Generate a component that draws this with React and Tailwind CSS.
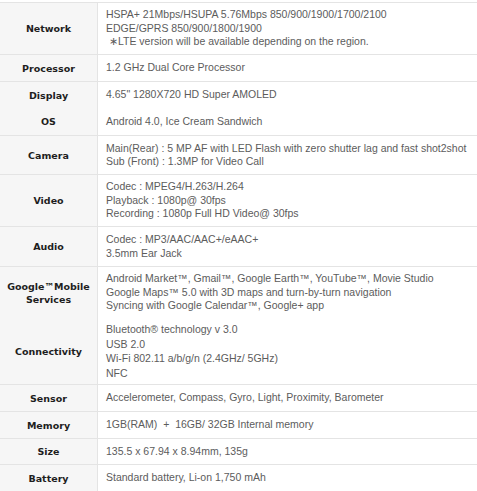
import React from "react";

const rows = [
  { label: ["Network"], h: "h-[52px]", lines: ["HSPA+ 21Mbps/HSUPA 5.76Mbps 850/900/1900/1700/2100", "EDGE/GPRS 850/900/1800/1900", "\u00a0\u2217LTE version will be available depending on the region."] },
  { label: ["Processor"], h: "h-[27px]", lines: ["1.2 GHz Dual Core Processor"] },
  { label: ["Display"], h: "h-[27px]", lines: ["4.65\" 1280X720 HD Super AMOLED"] },
  { label: ["OS"], h: "h-[27px]", lines: ["Android 4.0, Ice Cream Sandwich"], noBorder: true },
  { label: ["Camera"], h: "h-[39px]", lines: ["Main(Rear) : 5 MP AF with LED Flash with zero shutter lag and fast shot2shot", "Sub (Front) : 1.3MP for Video Call"] },
  { label: ["Video"], h: "h-[52px]", lines: ["Codec : MPEG4/H.263/H.264", "Playback : 1080p@ 30fps", "Recording : 1080p Full HD Video@ 30fps"] },
  { label: ["Audio"], h: "h-[40px]", lines: ["Codec : MP3/AAC/AAC+/eAAC+", "3.5mm Ear Jack"] },
  { label: ["Google\u2122Mobile", "Services"], h: "h-[52px]", lines: ["Android Market\u2122, Gmail\u2122, Google Earth\u2122, YouTube\u2122, Movie Studio", "Google Maps\u2122 5.0 with 3D maps and turn-by-turn navigation", "Syncing with Google Calendar\u2122, Google+ app"] },
  { label: ["Connectivity"], h: "h-[66px]", lines: ["Bluetooth\u00ae technology v 3.0", "USB 2.0", "Wi-Fi 802.11 a/b/g/n (2.4GHz/ 5GHz)", "NFC"], noBorder: true, lh: "leading-[14.5px]" },
  { label: ["Sensor"], h: "h-[27px]", lines: ["Accelerometer, Compass, Gyro, Light, Proximity, Barometer"] },
  { label: ["Memory"], h: "h-[27px]", lines: ["1GB(RAM)  +  16GB/ 32GB Internal memory"] },
  { label: ["Size"], h: "h-[26px]", lines: ["135.5 x 67.94 x 8.94mm, 135g"] },
  { label: ["Battery"], h: "h-[27px]", lines: ["Standard battery, Li-on 1,750 mAh"] },
];

export default function App() {
  return (
    <div className="w-[477px] h-[491px] overflow-hidden bg-white pt-[2px]">
      {rows.map((r, i) => (
        <div
          key={i}
          className={`flex ${r.h} ${r.noBorder ? "" : "border-t border-[#e4e4e4]"}`}
        >
          <div className="w-[98px] shrink-0 bg-[#f6f6f6] border-r border-[#e4e4e4] flex flex-col items-center justify-center text-center font-['DejaVu_Sans',sans-serif] font-bold text-[9.5px] leading-[13px] text-[#1e1e1e]">
            {r.label.map((l, j) => (
              <div key={j}>{l}</div>
            ))}
          </div>
          <div className={`flex-1 pl-[8px] flex flex-col justify-center font-['Liberation_Sans',Arial,sans-serif] text-[10.5px] ${r.lh || "leading-[13.5px]"} text-[#5c5c5c] whitespace-pre`}>
            {r.lines.map((l, j) => (
              <div key={j}>{l}</div>
            ))}
          </div>
        </div>
      ))}
    </div>
  );
}
